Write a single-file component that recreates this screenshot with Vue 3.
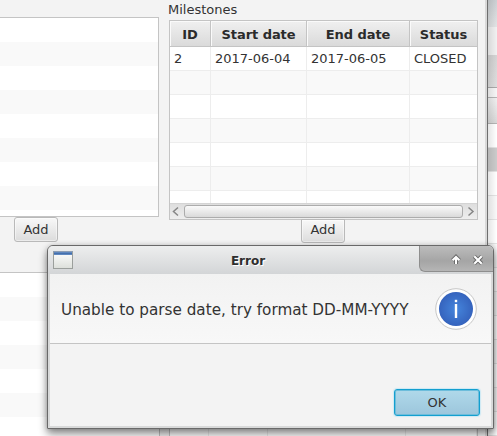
<script setup>
const columns = ['ID', 'Start date', 'End date', 'Status']
const milestones = [
  ['2', '2017-06-04', '2017-06-05', 'CLOSED'],
  ...Array.from({ length: 6 }, () => ['', '', '', '']),
]
const message = 'Unable to parse date, try format DD-MM-YYYY'
</script>

<template>
  <div class="desktop">
    <div class="back-window">
      <div class="back-title"></div>
      <div class="back-bar"></div>
      <div class="back-tool"></div>
      <div class="back-gap"></div>
      <div class="back-head"></div>
      <div v-for="n in 13" :key="n" class="back-row" :class="{ selected: n === 2 }"></div>
    </div>

    <div class="main-window">
      <div class="upper">
        <section class="left-pane">
          <div class="list"></div>
          <button class="btn left-add">Add</button>
        </section>
        <section class="right-pane">
          <div class="label">Milestones</div>
          <div class="table">
            <div class="grid head">
              <div v-for="c in columns" :key="c" class="th">{{ c }}</div>
            </div>
            <div class="rows">
              <div v-for="(row, i) in milestones" :key="i" class="grid row">
                <div v-for="(cell, j) in row" :key="j" class="td">{{ cell }}</div>
              </div>
            </div>
            <div class="scrollbar">
              <svg width="14" height="15" viewBox="0 0 14 15"><path d="M8 3.5 3.5 7.5 8 11.5" /></svg>
              <div class="thumb"></div>
              <svg width="14" height="15" viewBox="0 0 14 15"><path d="M5.5 3.5 10 7.5 5.5 11.5" /></svg>
            </div>
          </div>
          <button class="btn right-add">Add</button>
        </section>
      </div>
      <div class="lower">
        <div class="lower-list"></div>
        <div class="lower-table"><i></i><i></i><i></i><i></i></div>
      </div>
    </div>

    <div class="dialog">
      <header class="titlebar">
        <svg class="app-icon" width="20" height="18" viewBox="0 0 20 18">
          <defs>
            <linearGradient id="paper" x2="0" y2="1">
              <stop offset="0" stop-color="#fff" />
              <stop offset="1" stop-color="#dcdfda" />
            </linearGradient>
          </defs>
          <rect x=".5" y=".5" width="19" height="17" fill="url(#paper)" stroke="#9b9f9c" />
          <rect x="1" y="1" width="18" height="3" fill="#5f88c0" />
          <rect x="1" y="2" width="18" height="1" fill="#4570ac" />
          <rect x="0" y="0" width="20" height="1" fill="#8d9db3" />
        </svg>
        <h1>Error</h1>
        <div class="controls">
          <svg width="12" height="12" viewBox="0 0 12 12">
            <path class="edge" d="M6 10V3M2.6 6.3 6 2.9 9.4 6.3" />
            <path class="mark" d="M6 10V3M2.6 6.3 6 2.9 9.4 6.3" />
          </svg>
          <svg width="12" height="12" viewBox="0 0 12 12">
            <path class="edge" d="M2.3 2.3 9.7 9.7M9.7 2.3 2.3 9.7" />
            <path class="mark" d="M2.3 2.3 9.7 9.7M9.7 2.3 2.3 9.7" />
          </svg>
        </div>
      </header>
      <div class="body">
        <div class="message">
          <p>{{ message }}</p>
          <svg width="44" height="44" viewBox="0 0 44 44">
            <defs>
              <radialGradient id="blue">
                <stop offset="0" stop-color="#4585dc" />
                <stop offset="1" stop-color="#3563bd" />
              </radialGradient>
            </defs>
            <circle cx="22" cy="22" r="20.3" fill="#fff" stroke="#c6c6c6" />
            <circle cx="22" cy="22" r="17" fill="url(#blue)" />
            <rect x="20.8" y="12.8" width="2.4" height="2.4" fill="#fff" />
            <rect x="20.8" y="17" width="2.4" height="14" fill="#fff" />
          </svg>
        </div>
        <div class="actions"><button class="ok">OK</button></div>
      </div>
    </div>
  </div>
</template>

<style>
body { margin: 0; overflow: hidden; }
</style>

<style scoped>
* { box-sizing: border-box; }
.desktop {
  position: relative;
  width: 497px;
  height: 436px;
  overflow: hidden;
  background: #f3f3f3;
  font-family: "DejaVu Sans", sans-serif;
  font-size: 13px;
  color: #333;
}

/* window peeking out on the right */
.back-window {
  position: absolute;
  left: 488px;
  top: 0;
  width: 9px;
  height: 436px;
  background: #f3f3f3;
}
.back-window::after {
  content: "";
  position: absolute;
  inset: 0;
  background: linear-gradient(90deg, rgba(0, 0, 0, .1), transparent);
}
.back-title { height: 27px; background: linear-gradient(#ccd0d3, #e2e4e5); }
.back-bar { height: 28px; background: #f1f1f1; }
.back-tool { height: 33px; background: linear-gradient(#d4d4d4, #dedede); border-bottom: 1px solid #aaa; }
.back-gap { height: 10px; background: #f6f6f6; border-bottom: 1px solid #b5b5b5; }
.back-head { height: 26px; background: linear-gradient(#f0f0f0, #d8d8d8); border-bottom: 1px solid #b5b5b5; }
.back-row { height: 24px; background: #fff; border-bottom: 1px solid #e4e4e4; }
.back-row:nth-child(odd) { background: #f9f9f9; }
.back-row.selected { background: #cbcbcb; }

/* main application window */
.main-window {
  position: absolute;
  left: 0;
  top: 0;
  width: 488px;
  height: 436px;
  display: flex;
  flex-direction: column;
  background: #f3f3f3;
  border-right: 1px solid #6e6e6e;
  box-shadow: inset -2px 0 #d9d9d9;
}
.upper { display: flex; height: 272px; gap: 10px; }
.left-pane { width: 159px; padding-top: 17px; }
.list {
  height: 200px;
  border: 1px solid #c4c4c4;
  border-left: 0;
  background: repeating-linear-gradient(#fff 0 24px, #f9f9f9 24px 48px);
}
.btn {
  display: block;
  width: 44px;
  height: 25px;
  padding: 0;
  border: 1px solid #b9b9b9;
  border-radius: 3px;
  background: linear-gradient(#f8f8f8, #dcdcdc);
  box-shadow: inset 0 0 0 1px rgba(255, 255, 255, .45);
  font: inherit;
  color: #333;
  line-height: 23px;
}
.left-add { margin-left: 14px; }
.right-add {
  height: 24px;
  margin: -1px 0 0 132px;
  padding-bottom: 2px;
  border-top-left-radius: 0;
  border-top-right-radius: 0;
  line-height: 20px;
}
.right-pane { width: 309px; }
.label { height: 20px; line-height: 19px; margin-left: -1px; }
.table { height: 200px; border: 1px solid #c4c4c4; background: #fff; }
.grid { display: grid; grid-template-columns: 41px 96px 103px 67px; }
.th {
  height: 26px;
  line-height: 27px;
  text-align: center;
  font-weight: bold;
  letter-spacing: -.05px;
  color: #2b2b2b;
  background: linear-gradient(#f0f0f0, #dadada);
  border-right: 1px solid #c4c4c4;
  border-bottom: 1px solid #c4c4c4;
  box-shadow: inset 1px 1px #fafafa;
}
.rows { height: 156px; overflow: hidden; }
.row { background: #fff; }
.row:nth-child(even) { background: #f9f9f9; }
.td {
  height: 24px;
  padding-left: 4px;
  line-height: 23px;
  border-right: 1px solid #ededed;
  border-bottom: 1px solid #ededed;
}
.th:last-child, .td:last-child { border-right: 0; }
.scrollbar {
  display: flex;
  align-items: center;
  height: 16px;
  border-top: 1px solid #d4d4d4;
  background: linear-gradient(#dedede, #eee);
}
.scrollbar svg { flex: none; }
.scrollbar path { fill: none; stroke: #858585; stroke-width: 1.5; }
.thumb {
  flex: 1;
  height: 13px;
  border: 1px solid #acacac;
  border-radius: 3px;
  background: linear-gradient(#fafafa, #dadada);
}
.lower { display: flex; gap: 10px; flex: 1; }
.lower-list {
  width: 160px;
  border: 1px solid #c4c4c4;
  border-left: 0;
  border-bottom: 0;
  background: repeating-linear-gradient(#fff 0 24px, #f9f9f9 24px 48px);
}
.lower-table {
  width: 309px;
  margin-left: -1px;
  display: grid;
  grid-template-columns: 39px 59px 138px 71px;
  border: 1px solid #c4c4c4;
  border-bottom: 0;
  background: #fff;
}
.lower-table i { border-right: 1px solid #ededed; }

/* error dialog */
.dialog {
  position: absolute;
  left: 47px;
  top: 245px;
  width: 447px;
  height: 184px;
  display: flex;
  flex-direction: column;
  border: 1px solid #696969;
  border-radius: 6px 6px 1px 1px;
  background: #d8d9d9;
  box-shadow: 0 5px 9px rgba(0, 0, 0, .45), 0 0 5px rgba(0, 0, 0, .15);
  overflow: hidden;
}
.titlebar {
  display: grid;
  grid-template-columns: 74px 1fr 74px;
  height: 28px;
  flex: none;
  background: linear-gradient(#edeeee, #d3d5d7);
}
.app-icon { margin: 5px 0 0 5px; }
h1 {
  margin: 0;
  padding-right: 45px;
  text-align: center;
  font-size: 12px;
  line-height: 30px;
  color: #2e2e2e;
  text-shadow: 1px 1px #fff;
}
.controls {
  display: flex;
  gap: 10px;
  height: 26px;
  padding: 8px 0 0 30px;
  border: 1px solid #8e8e8e;
  border-top: 0;
  border-right: 0;
  border-radius: 0 0 0 6px;
  background: linear-gradient(#bcbcbc, #a5a5a5 60%, #b5b5b5);
}
.controls path { fill: none; }
.controls .edge { stroke: #666; stroke-width: 4; }
.controls .mark { stroke: #fff; stroke-width: 2.1; }
.body {
  flex: 1;
  margin: 0 2px 2px;
  background: #f3f3f3;
}
.message {
  display: flex;
  justify-content: space-between;
  align-items: center;
  height: 70px;
  padding: 0 13px 0 11px;
  border-bottom: 1px solid #c4c4c4;
  background: linear-gradient(#f2f2f2, #f8f8f8);
}
.message p { margin: 2px 0 0; font-size: 15.22px; white-space: nowrap; }
.message svg { flex: none; }
.actions { display: flex; justify-content: flex-end; padding: 45px 11px 0 0; }
.ok {
  width: 86px;
  height: 27px;
  padding: 0;
  border: 1px solid #139fcf;
  border-radius: 3px;
  background: linear-gradient(#b0d9ea, #9cc6dc);
  box-shadow: 0 0 1px 1px #cde9f4, inset 0 0 0 1px #6dbddb;
  font: inherit;
  color: #333;
  line-height: 25px;
}
</style>
